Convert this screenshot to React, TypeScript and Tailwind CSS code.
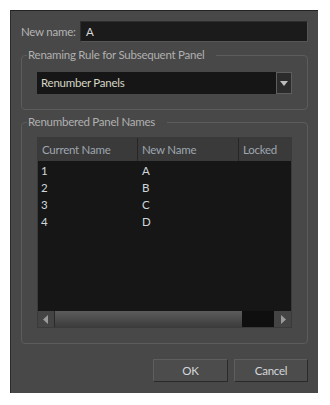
const rows = [
  { current: "1", next: "A" },
  { current: "2", next: "B" },
  { current: "3", next: "C" },
  { current: "4", next: "D" },
];

function ArrowLeft() {
  return (
    <svg width="6" height="9" viewBox="0 0 6 9">
      <path d="M5 0 L0 4.5 L5 9 Z" fill="#9a9a9a" />
    </svg>
  );
}

function ArrowRight() {
  return (
    <svg width="6" height="9" viewBox="0 0 6 9">
      <path d="M1 0 L6 4.5 L1 9 Z" fill="#9a9a9a" />
    </svg>
  );
}

export default function App() {
  return (
    <div className="w-[330px] h-[405px] bg-white pt-[10px] pl-[10px] text-[11.5px] tracking-[-0.25px] font-['Lato',sans-serif] whitespace-nowrap">
      <div className="w-[308px] h-[383px] bg-[#484848] border-l border-t border-l-[#2c2c2c] border-t-[#222] flex flex-col px-[10px]">
        {/* name row */}
        <div className="flex items-center mt-[10px] h-[21px]">
          <span className="w-[59px] text-[#b4b4b4]">New name:</span>
          <div className="flex-1 h-[21px] bg-[#1b1b1b] border border-[#2e2e2e] border-b-[#555] border-r-[#555] flex items-center px-[5px] text-[#d8d8d8]">
            A
          </div>
        </div>

        {/* renaming rule */}
        <fieldset className="mt-[6px] h-[62px] border border-[#5c5c5c] rounded-[4px] px-[15px]">
          <legend className="ml-[-10px] pl-[1px] pr-[12px] text-[#b0b0b0] leading-[14px]">Renaming Rule for Subsequent Panel</legend>
          <div className="mt-[10px] flex h-[22px]">
            <div className="flex-1 bg-[#161616] flex items-center px-[4px] text-[#d6d6c6]">Renumber Panels</div>
            <div className="w-[16px] bg-[#2b2b2b] border border-[#5e5e5e] flex items-center justify-center">
              <svg width="8" height="5" viewBox="0 0 8 5">
                <path d="M0 0 H8 L4 5 Z" fill="#bdbdbd" />
              </svg>
            </div>
          </div>
        </fieldset>

        {/* renumbered names */}
        <fieldset className="mt-[5px] h-[229px] border border-[#5c5c5c] rounded-[4px] px-[15px]">
          <legend className="ml-[-10px] pl-[1px] pr-[12px] text-[#b0b0b0] leading-[14px]">Renumbered Panel Names</legend>
          <div className="mt-[8px] h-[191px] flex flex-col bg-[#161616] border border-[#3a3a3a]">
            <div className="flex h-[23px] bg-[#3a3a3a] text-[#9ea6b0]">
              <div className="w-[100px] flex items-center px-[4px] border-r border-[#262626]">Current Name</div>
              <div className="w-[101px] flex items-center px-[4px] border-r border-[#262626]">New Name</div>
              <div className="flex-1 flex items-center px-[4px]">Locked</div>
            </div>
            <div className="flex-1 pt-[1px] text-[#cfd6dc]">
              {rows.map((r) => (
                <div key={r.current} className="flex h-[17px] items-center">
                  <div className="w-[100px] px-[3px]">{r.current}</div>
                  <div className="w-[101px] px-[4px]">{r.next}</div>
                </div>
              ))}
            </div>
            <div className="flex h-[16px] bg-[#3e3e3e]">
              <div className="w-[17px] flex items-center justify-center border-r border-[#2a2a2a] bg-[#444]">
                <ArrowLeft />
              </div>
              <div className="w-[187px] bg-gradient-to-b from-[#5c5c5c] to-[#3c3c3c]" />
              <div className="flex-1 bg-[#0f0f0f]" />
              <div className="w-[17px] flex items-center justify-center bg-[#444]">
                <ArrowRight />
              </div>
            </div>
          </div>
        </fieldset>

        {/* buttons */}
        <div className="flex justify-end gap-[6px] mt-[15px]">
          <button className="w-[75px] h-[23px] bg-[#4c4c4c] border border-[#5e5e5e] border-b-[#2a2a2a] border-r-[#2a2a2a] text-[#d4d8dc]">OK</button>
          <button className="w-[74px] h-[23px] bg-[#4c4c4c] border border-[#5e5e5e] border-b-[#2a2a2a] border-r-[#2a2a2a] text-[#d4d8dc]">Cancel</button>
        </div>
      </div>
    </div>
  );
}
